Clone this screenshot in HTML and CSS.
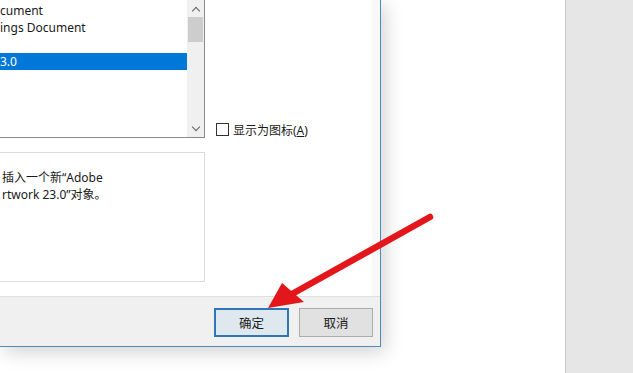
FILE: index.html
```html
<!DOCTYPE html>
<html lang="zh-CN">
<head>
  <meta charset="UTF-8">
  <title>插入对象</title>
  <link rel="stylesheet" href="styles.css">
</head>
<body>

  <div class="screen">
    <!-- Dialog (cut off at the left and top) -->
    <div class="dialog">
      <div class="dialog-body">
        <div class="left-col">
          <div class="listbox">
            <ul class="items">
              <li>cument</li>
              <li>ings Document</li>
              <li></li>
              <li class="selected">3.0</li>
            </ul>
            <div class="scrollbar">
              <span class="arrow up"></span>
              <span class="thumb"></span>
              <span class="track"></span>
              <span class="arrow down"></span>
            </div>
          </div>
          <div class="result-box">
            <p>插入一个新“Adobe<br>rtwork 23.0”对象。</p>
          </div>
        </div>
        <div class="right-col">
          <label class="check">
            <span class="box"></span>
            <span>显示为图标(<u>A</u>)</span>
          </label>
        </div>
      </div>
      <div class="dialog-footer">
        <button class="btn default">确定</button>
        <button class="btn">取消</button>
      </div>
    </div>

    <div class="blank"></div>
    <div class="side-panel"></div>

    <!-- red annotation arrow -->
    <svg class="annotation" width="633" height="373" viewBox="0 0 633 373">
      <line x1="430" y1="217" x2="292" y2="294" stroke="#e3161c" stroke-width="6.5" stroke-linecap="round"/>
      <polygon points="268,308 282,283 304,302" fill="#e3161c"/>
    </svg>
  </div>

</body>
</html>
```

FILE: styles.css
```css
body {
  margin: 0;
  font-family: "Noto Sans", "Noto Sans CJK SC", sans-serif;
  font-size: 12px;
  color: #1a1a1a;
  background: #fff;
  overflow: hidden;
}

.screen {
  position: relative;
  display: flex;
  width: 633px;
  height: 373px;
}

/* Dialog */
.dialog {
  width: 380px;
  height: 346px;
  display: flex;
  flex-direction: column;
  border-right: 1px solid #4f89bf;
  border-bottom: 1px solid #4f89bf;
  box-shadow: 4px 5px 18px rgba(0,0,0,0.18);
  background: #f0f0f0;
  z-index: 1;
}

.dialog-body {
  flex: 1;
  display: flex;
  background: #fff;
  border-right: 8px solid #f8f8f8;
}

.left-col {
  width: 205px;
  display: flex;
  flex-direction: column;
}

.listbox {
  height: 137px;
  display: flex;
  border-right: 1px solid #8a8a8a;
  border-bottom: 1px solid #8a8a8a;
}

.items {
  flex: 1;
  list-style: none;
  margin: 0;
  padding: 2px 0 0;
}

.items li {
  height: 17px;
  line-height: 17px;
  white-space: nowrap;
}

.items li.selected {
  background: #0078d7;
  color: #fff;
}

.scrollbar {
  width: 17px;
  display: flex;
  flex-direction: column;
  background: #f0f0f0;
}

.scrollbar .arrow {
  height: 17px;
  display: flex;
  align-items: center;
  justify-content: center;
}

.scrollbar .arrow::before {
  content: "";
  width: 5px;
  height: 5px;
  border-left: 1.5px solid #606060;
  border-top: 1.5px solid #606060;
}

.scrollbar .up::before {
  transform: translateY(2px) rotate(45deg);
}

.scrollbar .down::before {
  transform: translateY(-2px) rotate(225deg);
}

.scrollbar .thumb {
  height: 25px;
  margin: 0 1px;
  background: #cdcdcd;
}

.scrollbar .track {
  flex: 1;
}

.result-box {
  height: 128px;
  margin-top: 14px;
  border-top: 1px solid #dcdcdc;
  border-right: 1px solid #dcdcdc;
  border-bottom: 1px solid #dcdcdc;
}

.result-box p {
  margin: 0;
  padding: 16px 0 0 2px;
  line-height: 17px;
}

.right-col {
  flex: 1;
  display: flex;
  flex-direction: column;
  justify-content: flex-start;
  padding-top: 121px;
  padding-left: 11px;
}

.check {
  display: flex;
  align-items: center;
  gap: 4px;
  height: 17px;
}

.check .box {
  width: 11px;
  height: 11px;
  border: 1px solid #333;
  background: #fff;
}

.check u {
  text-decoration: underline;
}

/* Footer with buttons */
.dialog-footer {
  height: 50px;
  border-top: 1px solid #dfdfdf;
  display: flex;
  justify-content: flex-end;
  align-items: flex-start;
  gap: 10px;
  padding: 11px 7px 0 0;
  box-sizing: border-box;
}

.btn {
  width: 74px;
  height: 29px;
  font: inherit;
  font-size: 12.5px;
  color: #1a1a1a;
  background: #e1e1e1;
  border: 1px solid #adadad;
  padding: 0;
}

.btn.default {
  width: 75px;
  background: #e0e8ef;
  border: 2px solid #2f76b5;
}

.blank {
  width: 184px;
}

.side-panel {
  flex: 1;
  background: #e6e6e6;
  border-left: 1px solid #c9c9c9;
}

.annotation {
  position: absolute;
  left: 0;
  top: 0;
  z-index: 2;
}
```
